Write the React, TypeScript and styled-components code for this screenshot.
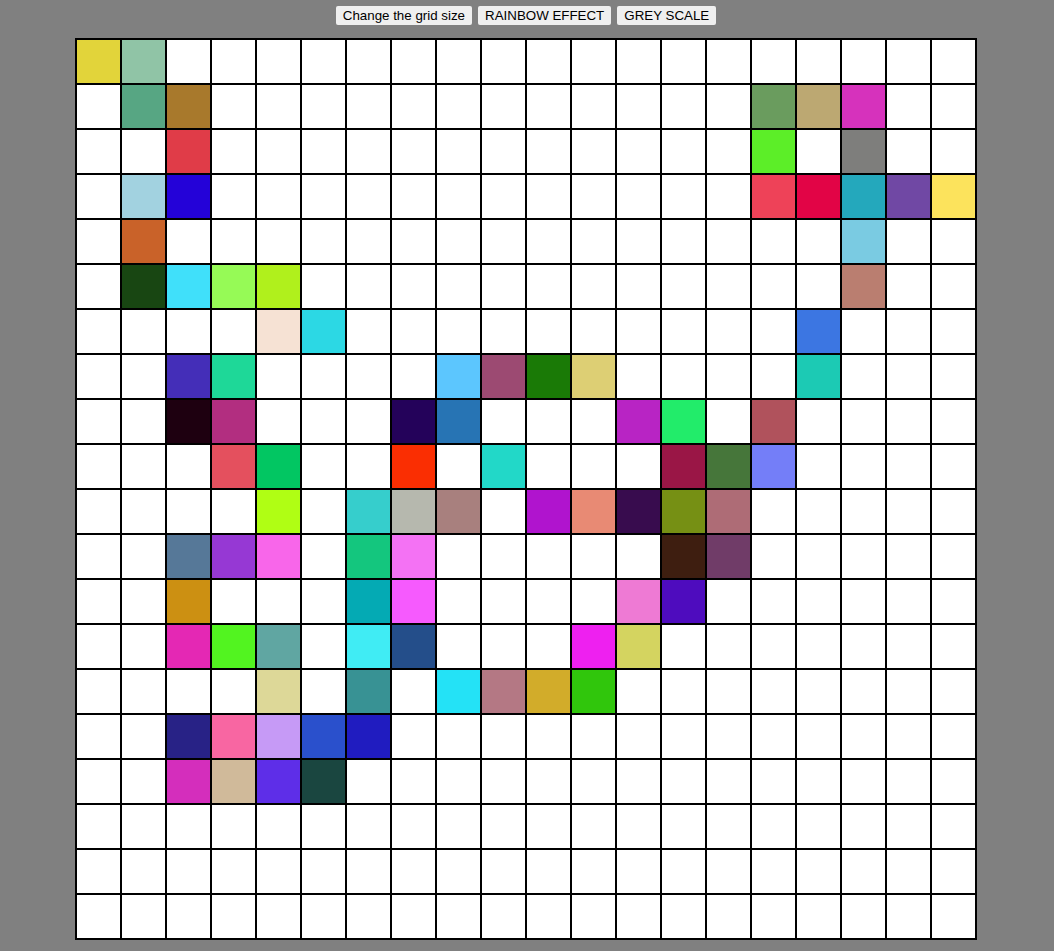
import React from "react";
import styled, { createGlobalStyle } from "styled-components";

const GlobalStyle = createGlobalStyle`
  html, body {
    margin: 0;
    padding: 0;
    background: #808080;
    font-family: "Liberation Sans", Arial, sans-serif;
  }
`;

const Page = styled.div`
  width: calc(100% - 2px);
  display: flex;
  flex-direction: column;
  align-items: center;
  padding-top: 6px;
`;

const Toolbar = styled.div`
  display: flex;
  gap: 6px;
  justify-content: center;
`;

const Button = styled.button`
  font-family: "Liberation Sans", Arial, sans-serif;
  font-size: 13.33px;
  color: #000;
  background: #efefef;
  border: none;
  border-radius: 2px;
  height: 19px;
  padding: 0 7px;
  line-height: 19px;
  cursor: pointer;
`;

const Grid = styled.div`
  margin-top: 13px;
  display: grid;
  grid-template-columns: repeat(20, 45px);
  grid-auto-rows: 45px;
  border: 1px solid #000;
  background: #fff;
`;

const Cell = styled.div<{ $color?: string }>`
  box-sizing: border-box;
  border: 1px solid #000;
  background: ${(p) => p.$color ?? "#ffffff"};
`;

const colored: Record<string, string> = {
  "0-0": "#e2d43a",
  "0-1": "#90c4a6",
  "1-1": "#57a683",
  "1-2": "#a8792c",
  "1-15": "#6a9c5e",
  "1-16": "#bca872",
  "1-17": "#d632bc",
  "2-2": "#e03c48",
  "2-15": "#5cee28",
  "2-17": "#7e7e7c",
  "3-1": "#a2d2e0",
  "3-2": "#2402d8",
  "3-15": "#ee4258",
  "3-16": "#e20446",
  "3-17": "#24a8bc",
  "3-18": "#7048a4",
  "3-19": "#fce35c",
  "4-1": "#c96229",
  "4-17": "#7acbe2",
  "5-1": "#184612",
  "5-2": "#40e0fa",
  "5-3": "#96fa56",
  "5-4": "#b0f01c",
  "5-17": "#ba7e70",
  "6-4": "#f6e2d4",
  "6-5": "#2cd8e4",
  "6-16": "#3c76e2",
  "7-2": "#442eb8",
  "7-3": "#1ed898",
  "7-8": "#5cc6fe",
  "7-9": "#9c4a72",
  "7-10": "#1a7a06",
  "7-11": "#ddcf74",
  "7-16": "#1ccab4",
  "8-2": "#1e0010",
  "8-3": "#b22e80",
  "8-7": "#24025a",
  "8-8": "#2774b4",
  "8-12": "#b824c4",
  "8-13": "#22ec6a",
  "8-15": "#b0525c",
  "9-3": "#e4505e",
  "9-4": "#02c662",
  "9-7": "#fa2e02",
  "9-9": "#22d8c8",
  "9-13": "#9a1646",
  "9-14": "#46763a",
  "9-15": "#747ef8",
  "10-4": "#b0fe14",
  "10-6": "#36cecc",
  "10-7": "#b6b8ae",
  "10-8": "#a8807e",
  "10-10": "#b014ce",
  "10-11": "#e88a74",
  "10-12": "#380c4e",
  "10-13": "#769014",
  "10-14": "#ae6c76",
  "11-2": "#567898",
  "11-3": "#9638d4",
  "11-4": "#f866ea",
  "11-6": "#14c67e",
  "11-7": "#f472f4",
  "11-13": "#3e1e10",
  "11-14": "#703c68",
  "12-2": "#cc9012",
  "12-6": "#04aab4",
  "12-7": "#f65afe",
  "12-12": "#ee7ad4",
  "12-13": "#4e0cbe",
  "13-2": "#e428b4",
  "13-3": "#52f420",
  "13-4": "#60a6a2",
  "13-6": "#40ecf4",
  "13-7": "#244e8a",
  "13-11": "#ee20f0",
  "13-12": "#d4d460",
  "14-4": "#ddd898",
  "14-6": "#389294",
  "14-8": "#24e2f6",
  "14-9": "#b47884",
  "14-10": "#d2ac2a",
  "14-11": "#30c60c",
  "15-2": "#282286",
  "15-3": "#f866a2",
  "15-4": "#c69af6",
  "15-5": "#2a50cc",
  "15-6": "#201cc0",
  "16-2": "#d42ebc",
  "16-3": "#d0ba9a",
  "16-4": "#5e2ee8",
  "16-5": "#1a4640",
};

const SIZE = 20;

export default function App() {
  const cells = [];
  for (let r = 0; r < SIZE; r++) {
    for (let c = 0; c < SIZE; c++) {
      const key = `${r}-${c}`;
      cells.push(<Cell key={key} $color={colored[key]} />);
    }
  }
  return (
    <>
      <GlobalStyle />
      <Page>
        <Toolbar>
          <Button>Change the grid size</Button>
          <Button>RAINBOW EFFECT</Button>
          <Button>GREY SCALE</Button>
        </Toolbar>
        <Grid>{cells}</Grid>
      </Page>
    </>
  );
}
